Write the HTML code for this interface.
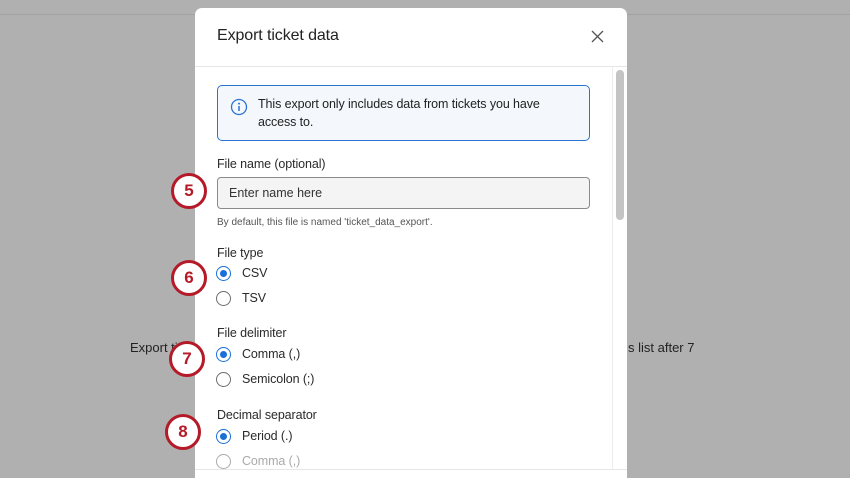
<!DOCTYPE html>
<html><head><style>
*{margin:0;padding:0;box-sizing:border-box}
body{width:850px;height:475px;overflow:hidden;background:#b0b0b0;font-family:"Liberation Sans",sans-serif;position:relative;color:#262626}
.a{position:absolute}
.lbl{font-size:12.5px;color:#2a2a2a;letter-spacing:-0.1px}
.radio{position:absolute;width:15px;height:15px;border-radius:50%;border:1px solid #6d6d6d;background:#fff}
.radio.on{border-color:#1a6fd8}
.radio.on::after{content:"";position:absolute;left:3px;top:3px;width:7px;height:7px;border-radius:50%;background:#1a6fd8}
.circ{position:absolute;width:36px;height:36px;border-radius:50%;border:3px solid #b41a28;background:#fff;color:#b41a28;font-weight:bold;font-size:17px;text-align:center;line-height:30px}
</style></head><body>
<div class="a" style="left:0;top:14px;width:850px;height:1px;background:#a3a3a3"></div>
<div class="a" style="left:130px;top:340px;font-size:13px;color:#222">Export ti</div>
<div class="a" style="left:195px;top:8px;width:432px;height:470px;background:#fff;border-radius:7px 7px 0 0"></div>
<div class="a" style="left:628px;top:340px;font-size:13px;color:#222">s list after 7</div>
<div class="a" style="left:217px;top:27px;font-size:16px;color:#222;letter-spacing:-0.1px">Export ticket data</div>
<svg class="a" style="left:591px;top:30px" width="13" height="13"><path d="M1 1L12 12M12 1L1 12" stroke="#555" stroke-width="1.3"/></svg>
<div class="a" style="left:195px;top:66px;width:432px;height:1px;background:#e6e6e6"></div>
<div class="a" style="left:612px;top:67px;width:1px;height:402px;background:#ececec"></div>
<div class="a" style="left:616px;top:70px;width:8px;height:150px;border-radius:4px;background:#c4c4c4"></div>
<div class="a" style="left:217px;top:85px;width:373px;height:56px;border:1px solid #2b73d2;border-radius:5px;background:#f4f8fc"></div>
<svg class="a" style="left:230px;top:98px" width="18" height="18"><circle cx="9" cy="9" r="7.5" fill="none" stroke="#2b73d2" stroke-width="1.3"/><circle cx="9" cy="5.6" r="1" fill="#2b73d2"/><path d="M9 8v5" stroke="#2b73d2" stroke-width="1.5"/></svg>
<div class="a" style="left:258px;top:95px;width:300px;font-size:12.5px;line-height:18px;color:#222;letter-spacing:-0.1px">This export only includes data from tickets you have access to.</div>
<div class="a lbl" style="left:217px;top:157px">File name (optional)</div>
<div class="a" style="left:217px;top:177px;width:373px;height:32px;border:1px solid #8a8a8a;border-radius:4px;background:#f4f4f4;font-size:12.5px;color:#333;padding:8px 0 0 11px">Enter name here</div>
<div class="a" style="left:217px;top:217px;font-size:10px;color:#555">By default, this file is named 'ticket_data_export'.</div>
<div class="a lbl" style="left:217px;top:246px">File type</div>
<div class="radio on" style="left:216px;top:266px"></div><div class="a lbl" style="left:242px;top:266px">CSV</div>
<div class="radio" style="left:216px;top:291px"></div><div class="a lbl" style="left:242px;top:291px">TSV</div>
<div class="a lbl" style="left:217px;top:326px">File delimiter</div>
<div class="radio on" style="left:216px;top:347px"></div><div class="a lbl" style="left:242px;top:347px">Comma (,)</div>
<div class="radio" style="left:216px;top:372px"></div><div class="a lbl" style="left:242px;top:372px">Semicolon (;)</div>
<div class="a lbl" style="left:217px;top:408px">Decimal separator</div>
<div class="radio on" style="left:216px;top:429px"></div><div class="a lbl" style="left:242px;top:429px">Period (.)</div>
<div class="radio" style="left:216px;top:454px;border-color:#aaa"></div><div class="a lbl" style="left:242px;top:454px;color:#aaa">Comma (,)</div>
<div class="a" style="left:195px;top:469px;width:432px;height:1px;background:#e6e6e6"></div>
<div class="circ" style="left:171px;top:173px">5</div>
<div class="circ" style="left:171px;top:260px">6</div>
<div class="circ" style="left:169px;top:341px">7</div>
<div class="circ" style="left:165px;top:414px">8</div>
</body></html>
